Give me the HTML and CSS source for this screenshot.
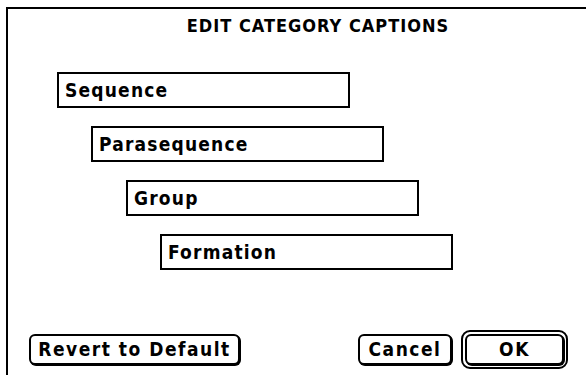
FILE: index.html
```html
<!DOCTYPE html>
<html lang="en">
<head>
  <meta charset="UTF-8">
  <title>Edit Category Captions</title>
  <link rel="stylesheet" href="styles.css">
</head>
<body>
  <!-- Dialog window, cropped at the right edge -->
  <div id="dialog">
    <h1 class="dialog-title">EDIT CATEGORY CAPTIONS</h1>

    <div class="caption-list">
      <div class="caption-field level-1">Sequence</div>
      <div class="caption-field level-2">Parasequence</div>
      <div class="caption-field level-3">Group</div>
      <div class="caption-field level-4">Formation</div>
    </div>

    <div class="button-row">
      <button class="mac-button revert">Revert to Default</button>
      <div class="right-buttons">
        <button class="mac-button cancel">Cancel</button>
        <div class="default-ring">
          <button class="mac-button ok">OK</button>
        </div>
      </div>
    </div>
  </div>
</body>
</html>
```

FILE: styles.css
```css
body {
  margin: 0;
  background-color: #ffffff;
  color: #000000;
  font-family: "DejaVu Sans", "Liberation Sans", sans-serif;
  font-stretch: condensed;
  font-weight: bold;
  font-size: 19px;
  overflow: hidden;
  height: 375px;
}

#dialog {
  margin-top: 7px;
  margin-left: 6px;
  width: 620px;
  height: 380px;
  border-top: 2px solid #000;
  border-left: 2px solid #000;
}

.dialog-title {
  margin: 0;
  padding-top: 6px;
  font-size: 18px;
  line-height: 22px;
  font-weight: bold;
  text-align: center;
  letter-spacing: 1px;
}

.caption-list {
  display: flex;
  flex-direction: column;
  gap: 18px;
  margin-top: 35px;
}

.caption-field {
  box-sizing: border-box;
  width: 293px;
  height: 36px;
  border: 2px solid #000;
  padding: 5px 6px;
  line-height: 22px;
  letter-spacing: 1.2px;
}

.level-1 { margin-left: 49px; }
.level-2 { margin-left: 83px; }
.level-3 { margin-left: 118px; }
.level-4 { margin-left: 152px; }

.button-row {
  display: flex;
  align-items: center;
  justify-content: space-between;
  margin-top: 60px;
  margin-left: 21px;
  width: 539px;
}

.right-buttons {
  display: flex;
  align-items: center;
  gap: 9px;
}

.mac-button {
  box-sizing: border-box;
  height: 31px;
  padding: 0;
  border: 2px solid #000;
  border-radius: 6px;
  background-color: #fff;
  color: #000;
  font-family: inherit;
  font-stretch: condensed;
  font-weight: bold;
  font-size: 19px;
  line-height: 25px;
  letter-spacing: 1.5px;
  box-shadow: 1px 1px 0 #000;
}

.revert {
  width: 211px;
}

.cancel {
  width: 94px;
}

.default-ring {
  padding: 2px;
  border: 2px solid #000;
  border-radius: 9px;
}

.ok {
  display: block;
  width: 99px;
}
```
